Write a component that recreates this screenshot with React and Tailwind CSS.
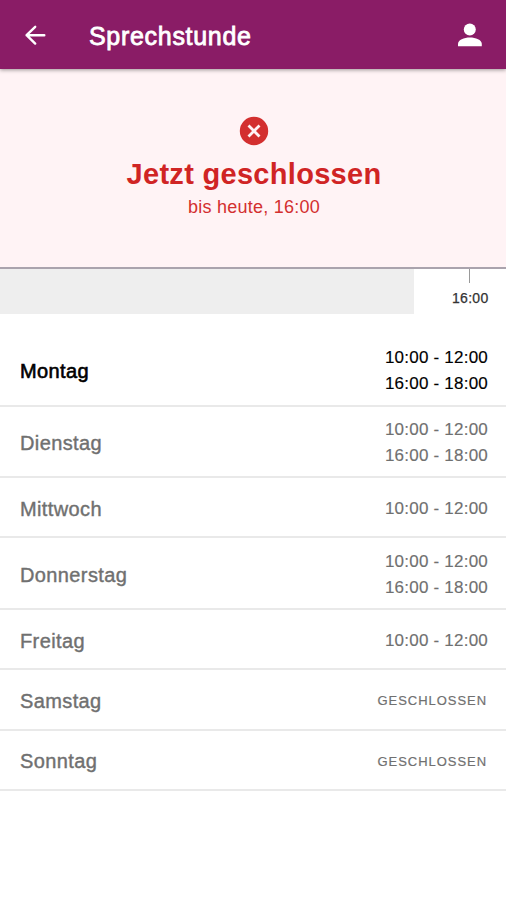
import React from 'react';

const days = [
  { name: 'Montag', hours: ['10:00 - 12:00', '16:00 - 18:00'], today: true },
  { name: 'Dienstag', hours: ['10:00 - 12:00', '16:00 - 18:00'] },
  { name: 'Mittwoch', hours: ['10:00 - 12:00'] },
  { name: 'Donnerstag', hours: ['10:00 - 12:00', '16:00 - 18:00'] },
  { name: 'Freitag', hours: ['10:00 - 12:00'] },
  { name: 'Samstag', hours: [] },
  { name: 'Sonntag', hours: [] },
];

const DayRow = ({ day }) => (
  <li
    className={`flex items-center justify-between border-b-2 border-[#e9e9e9] pl-5 pr-[18px] pt-[3px] ${
      day.hours.length > 1 ? 'h-[71.5px]' : 'h-[60.4px]'
    } ${day.today ? 'text-black' : 'text-[#707070]'}`}
  >
    <span
      className={`text-[20px] leading-6 tracking-[0.38px] ${
        day.today ? '[-webkit-text-stroke:0.6px_#000]' : '[-webkit-text-stroke:0.4px_#707070]'
      }`}
    >
      {day.name}
    </span>
    {day.hours.length > 0 ? (
      <div className="text-right text-[17px] leading-[26px] tracking-[0.22px] [-webkit-text-stroke:0.15px_currentColor]">
        {day.hours.map((hour) => (
          <div key={hour}>{hour}</div>
        ))}
      </div>
    ) : (
      <span className="pr-px pt-px text-[13px] leading-5 tracking-[0.95px] [-webkit-text-stroke:0.2px_#707070]">GESCHLOSSEN</span>
    )}
  </li>
);

const App = () => {
  return (
    <div className="min-h-screen bg-white font-['Liberation_Sans',Arial,sans-serif]">
      {/* App bar */}
      <header className="relative flex h-[69px] items-center bg-[#8a1c66] pl-[22px] pr-[22px] text-white shadow-[0_1px_4px_rgba(0,0,0,0.4)]">
        <button aria-label="Zurück">
          <svg className="h-[26px] w-[26px]" viewBox="0 0 26 26" fill="none" stroke="currentColor" strokeWidth="2.4" strokeLinecap="round" strokeLinejoin="round">
            <path d="M22.3 13.2H4.6M13.2 4.8L4.6 13.2L13.2 21.6" />
          </svg>
        </button>
        <h1 className="ml-[41px] pt-[3px] text-[25px] leading-8 tracking-[0.7px] [-webkit-text-stroke:0.8px_#fff]">
          Sprechstunde
        </h1>
        <button aria-label="Profil" className="ml-auto">
          <svg className="h-7 w-7" viewBox="0 0 28 28" fill="currentColor">
            <circle cx="13.8" cy="8.4" r="6" />
            <path d="M2 25.3v-2.2c0-4.6 6.1-6.7 11.9-6.7s11.9 2.1 11.9 6.7v2.2z" />
          </svg>
        </button>
      </header>

      {/* Current status */}
      <section className="flex h-[200px] flex-col items-center border-b-2 border-[#aaa3ad] bg-[#fff3f5] pl-[2px] pt-[47px] text-[#d32f2f]">
        <svg className="h-[30px] w-[30px]" viewBox="0 0 30 30">
          <circle cx="15" cy="15" r="14.2" fill="currentColor" />
          <path d="M9.5 9.5L20.5 20.5M20.5 9.5L9.5 20.5" stroke="#fff3f5" strokeWidth="2.8" />
        </svg>
        <h2 className="mt-[10px] text-[29px] font-bold leading-9 tracking-[0.3px] text-[#d02424]">Jetzt geschlossen</h2>
        <p className="mt-[3px] text-[18px] leading-6 tracking-[0.25px]">bis heute, 16:00</p>
      </section>

      {/* Timeline */}
      <section className="flex h-[45px]">
        <div className="w-[414px] bg-[#eeeeee]" />
        <div className="ml-[38px] flex flex-col items-center">
          <div className="mr-[2px] h-[14px] w-[1.5px] bg-[#999]" />
          <span className="mt-[5px] text-[14px] leading-5 tracking-[0.3px] text-[#333] [-webkit-text-stroke:0.25px_#333]">16:00</span>
        </div>
      </section>

      {/* Opening hours */}
      <ul className="pt-[21px]">
        {days.map((day) => (
          <DayRow key={day.name} day={day} />
        ))}
      </ul>
    </div>
  );
};

export default App;
